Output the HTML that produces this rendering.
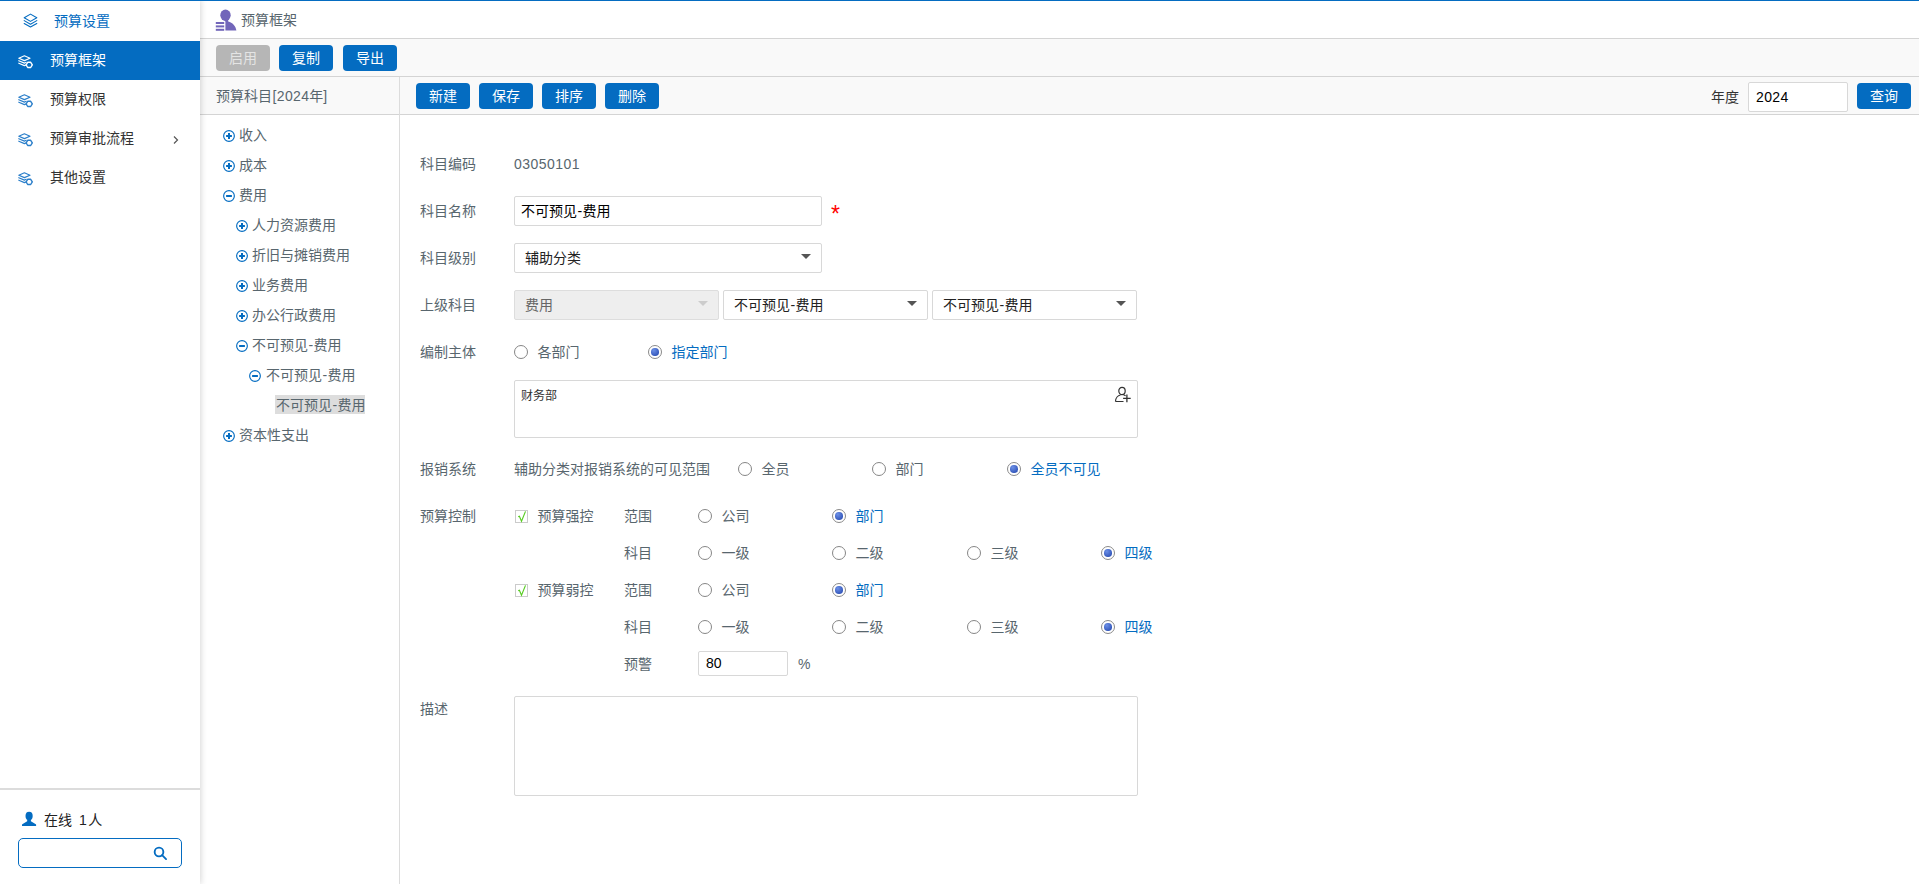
<!DOCTYPE html>
<html lang="zh-CN">
<head>
<meta charset="utf-8">
<title>预算框架</title>
<style>
*{box-sizing:border-box;margin:0;padding:0}
html,body{width:1919px;height:884px;overflow:hidden;background:#fff}
body{position:relative;font-family:"Liberation Sans","Noto Sans CJK SC",sans-serif;font-size:14px;color:#58666e;line-height:20px}
.abs{position:absolute}
#topline{left:0;top:0;width:1919px;height:1px;background:#046cc1;z-index:20}
/* sidebar */
#side{left:0;top:0;width:200px;height:884px;background:#fff;z-index:5;box-shadow:1px 0 6px rgba(0,0,0,.16)}
.mi{position:absolute;left:0;width:200px;height:39px;line-height:39px;color:#333}
.mi span.t{position:absolute;left:50px;top:0;white-space:nowrap}
.mi svg{position:absolute;left:18px;top:12px}
.mi.act{background:#046cc1;color:#fff}
.mi.head{color:#046cc1}
.mi.head span.t{left:54px}
#sidefoot{left:0;top:788px;width:200px;height:2px;background:#dcdcdc}
/* main */
#main{left:200px;top:0;width:1719px;height:884px;background:#fff}
.hl{position:absolute;height:1px;background:#d4d4d4}
.bar{position:absolute;background:#f9f9f9}
.btn{position:absolute;width:54px;height:26px;line-height:26px;border-radius:4px;background:#046cc1;color:#fff;text-align:center;font-size:14px}
.btn.dis{background:#b6b6b6;color:#e4e4e4}
.tn{position:absolute;white-space:nowrap;line-height:20px;height:20px;color:#58666e}
.tn svg{position:absolute;top:4px}
.lab{position:absolute;white-space:nowrap;line-height:20px;height:20px}
.inp{position:absolute;border:1px solid #d8d8d8;border-radius:2px;background:#fff;color:#000;white-space:nowrap;overflow:hidden}
.sel{position:absolute;border:1px solid #d8d8d8;border-radius:2px;background:#fff;color:#222;height:30px;line-height:28px;padding-left:10px;white-space:nowrap}
.sel:after{content:"";position:absolute;right:10px;top:10px;border-left:5px solid transparent;border-right:5px solid transparent;border-top:5px solid #555}
.sel.dis{background:#eee;color:#666;border-color:#ddd}
.sel.dis:after{border-top-color:#ccc}
.rad{position:absolute;width:14px;height:14px;border-radius:50%;border:1px solid #868686;background:#fff}
.rad.on{border-color:#8a8a8a}
.rad.on:after{content:"";position:absolute;left:2.2px;top:2.2px;width:7.6px;height:7.6px;border-radius:50%;background:radial-gradient(circle at 35% 30%,#6b8fe6,#2c4fb4 85%)}
.blue{color:#046cc1}
.hy{padding:0 .45px}
.chk{position:absolute;width:13px;height:13px;border:1px solid #cbcbcb;background:#fff}
</style>
</head>
<body>
<div id="main" class="abs">
<svg class="abs" width="22" height="22" viewBox="0 0 22 22" style="left:15px;top:9.3px" fill="#7266ba"><ellipse cx="10.5" cy="6.2" rx="5.2" ry="5.6"/><path d="M8.800 10 H13.200 V12.400 C17.400 13.600 20.800 16.600 21.400 21.600 H10.400 V12.400 C9.600 12 9 11.200 8.800 10 Z"/><rect x="0.8" y="13" width="8.4" height="2"/><rect x="0.8" y="16.400" width="8.4" height="2"/><rect x="0.8" y="19.800" width="8.4" height="2"/></svg>
<div class="lab" style="left:41px;top:10px;color:#58666e">预算框架</div>
<div class="hl" style="left:0;top:38px;width:1719px"></div>
<div class="bar" style="left:0;top:39px;width:1719px;height:37px"></div>
<div class="hl" style="left:0;top:76px;width:1719px"></div>
<div class="bar" style="left:0;top:77px;width:1719px;height:37px"></div>
<div class="hl" style="left:0;top:114px;width:1719px"></div>
<div class="abs" style="left:199px;top:77px;width:1px;height:807px;background:#dcdcdc"></div>
<div class="btn dis" style="left:16px;top:45px">启用</div>
<div class="btn" style="left:79px;top:45px">复制</div>
<div class="btn" style="left:143px;top:45px">导出</div>
<div class="btn" style="left:216px;top:83px">新建</div>
<div class="btn" style="left:279px;top:83px">保存</div>
<div class="btn" style="left:342px;top:83px">排序</div>
<div class="btn" style="left:405px;top:83px">删除</div>
<div class="lab" style="left:16px;top:86px">预算科目<span style="letter-spacing:.35px;margin-left:.5px">[2024</span>年]</div>
<div class="lab" style="left:1511px;top:87px;color:#333">年度</div>
<div class="inp" style="left:1548px;top:82px;width:100px;height:30px;line-height:28px;padding-left:7px;font-size:14px;letter-spacing:.4px">2024</div>
<div class="btn" style="left:1657px;top:83px">查询</div>
<svg class="abs" width="12" height="12" viewBox="0 0 12 12" style="left:23px;top:129.5px" fill="none" stroke="#046cc1" stroke-width="1.15"><circle cx="6" cy="6" r="5.35"/><path d="M3.100 6 H8.900" stroke-width="2"/><path d="M6 3.100 V8.900" stroke-width="2"/></svg>
<div class="tn" style="left:39px;top:125px">收入</div>
<svg class="abs" width="12" height="12" viewBox="0 0 12 12" style="left:23px;top:159.5px" fill="none" stroke="#046cc1" stroke-width="1.15"><circle cx="6" cy="6" r="5.35"/><path d="M3.100 6 H8.900" stroke-width="2"/><path d="M6 3.100 V8.900" stroke-width="2"/></svg>
<div class="tn" style="left:39px;top:155px">成本</div>
<svg class="abs" width="12" height="12" viewBox="0 0 12 12" style="left:23px;top:189.5px" fill="none" stroke="#046cc1" stroke-width="1.15"><circle cx="6" cy="6" r="5.35"/><path d="M3.100 6 H8.900" stroke-width="2"/></svg>
<div class="tn" style="left:39px;top:185px">费用</div>
<svg class="abs" width="12" height="12" viewBox="0 0 12 12" style="left:36px;top:219.5px" fill="none" stroke="#046cc1" stroke-width="1.15"><circle cx="6" cy="6" r="5.35"/><path d="M3.100 6 H8.900" stroke-width="2"/><path d="M6 3.100 V8.900" stroke-width="2"/></svg>
<div class="tn" style="left:52px;top:215px">人力资源费用</div>
<svg class="abs" width="12" height="12" viewBox="0 0 12 12" style="left:36px;top:249.5px" fill="none" stroke="#046cc1" stroke-width="1.15"><circle cx="6" cy="6" r="5.35"/><path d="M3.100 6 H8.900" stroke-width="2"/><path d="M6 3.100 V8.900" stroke-width="2"/></svg>
<div class="tn" style="left:52px;top:245px">折旧与摊销费用</div>
<svg class="abs" width="12" height="12" viewBox="0 0 12 12" style="left:36px;top:279.5px" fill="none" stroke="#046cc1" stroke-width="1.15"><circle cx="6" cy="6" r="5.35"/><path d="M3.100 6 H8.900" stroke-width="2"/><path d="M6 3.100 V8.900" stroke-width="2"/></svg>
<div class="tn" style="left:52px;top:275px">业务费用</div>
<svg class="abs" width="12" height="12" viewBox="0 0 12 12" style="left:36px;top:309.5px" fill="none" stroke="#046cc1" stroke-width="1.15"><circle cx="6" cy="6" r="5.35"/><path d="M3.100 6 H8.900" stroke-width="2"/><path d="M6 3.100 V8.900" stroke-width="2"/></svg>
<div class="tn" style="left:52px;top:305px">办公行政费用</div>
<svg class="abs" width="12" height="12" viewBox="0 0 12 12" style="left:36px;top:339.5px" fill="none" stroke="#046cc1" stroke-width="1.15"><circle cx="6" cy="6" r="5.35"/><path d="M3.100 6 H8.900" stroke-width="2"/></svg>
<div class="tn" style="left:52px;top:335px">不可预见<span class="hy">-</span>费用</div>
<svg class="abs" width="12" height="12" viewBox="0 0 12 12" style="left:49px;top:369.5px" fill="none" stroke="#046cc1" stroke-width="1.15"><circle cx="6" cy="6" r="5.35"/><path d="M3.100 6 H8.900" stroke-width="2"/></svg>
<div class="tn" style="left:66px;top:365px">不可预见<span class="hy">-</span>费用</div>
<div class="tn" style="left:75px;top:395px;width:90px;height:19px;line-height:20px;background:#ddd;padding-left:1px">不可预见<span class="hy">-</span>费用</div>
<svg class="abs" width="12" height="12" viewBox="0 0 12 12" style="left:23px;top:429.5px" fill="none" stroke="#046cc1" stroke-width="1.15"><circle cx="6" cy="6" r="5.35"/><path d="M3.100 6 H8.900" stroke-width="2"/><path d="M6 3.100 V8.900" stroke-width="2"/></svg>
<div class="tn" style="left:39px;top:425px">资本性支出</div>
<div class="lab" style="left:220px;top:154px">科目编码</div>
<div class="lab" style="left:220px;top:201px">科目名称</div>
<div class="lab" style="left:220px;top:248px">科目级别</div>
<div class="lab" style="left:220px;top:295px">上级科目</div>
<div class="lab" style="left:220px;top:342px">编制主体</div>
<div class="lab" style="left:220px;top:459px">报销系统</div>
<div class="lab" style="left:220px;top:506px">预算控制</div>
<div class="lab" style="left:220px;top:699px">描述</div>
<div class="lab" style="left:314px;top:154px;letter-spacing:.45px">03050101</div>
<div class="inp" style="left:314px;top:196px;width:308px;height:30px;line-height:28px;padding-left:6px">不可预见<span class="hy">-</span>费用</div>
<div class="lab" style="left:631px;top:204px;color:#f00;font-size:23px" id="ast">*</div>
<div class="sel" style="left:314px;top:243px;width:308px">辅助分类</div>
<div class="sel dis" style="left:314px;top:290px;width:205px">费用</div>
<div class="sel" style="left:523px;top:290px;width:205px">不可预见<span class="hy">-</span>费用</div>
<div class="sel" style="left:732px;top:290px;width:205px">不可预见<span class="hy">-</span>费用</div>
<div class="rad" style="left:314px;top:345px"></div><div class="lab" style="left:337.5px;top:342px">各部门</div>
<div class="rad on" style="left:448px;top:345px"></div><div class="lab blue" style="left:471.5px;top:342px">指定部门</div>
<div class="inp" style="left:314px;top:380px;width:624px;height:58px;line-height:18px;padding:6px 6px;font-size:12px;color:#333">财务部</div>
<svg class="abs" width="18" height="18" viewBox="0 0 18 18" style="left:914px;top:386px" fill="none" stroke="#333" stroke-width="1.200"><ellipse cx="8" cy="5" rx="3.200" ry="3.600"/><path d="M1.500 15.500 C1.500 12 4 9.500 6.500 9 M9.500 9 C10.300 9.100 11 9.400 11.600 9.800 M1.500 15.500 H9.500"/><path d="M12.900 8.600 V16.200 M9.100 12.400 H16.700" stroke-width="1.300"/></svg>
<div class="lab" style="left:314px;top:459px">辅助分类对报销系统的可见范围</div>
<div class="rad" style="left:538px;top:462px"></div><div class="lab" style="left:561.5px;top:459px">全员</div>
<div class="rad" style="left:672px;top:462px"></div><div class="lab" style="left:695.5px;top:459px">部门</div>
<div class="rad on" style="left:807px;top:462px"></div><div class="lab blue" style="left:830.5px;top:459px">全员不可见</div>
<div class="chk" style="left:315px;top:510px"><svg width="11" height="11" viewBox="0 0 11 11" style="position:absolute;left:0;top:0;overflow:visible" fill="none" stroke="#58cc22" stroke-width="1.15"><path d="M2.200 5.800 L3.400 5.200 L5.500 10.300 L9.500 0.400"/></svg></div><div class="lab" style="left:337.5px;top:506px">预算强控</div>
<div class="chk" style="left:315px;top:584px"><svg width="11" height="11" viewBox="0 0 11 11" style="position:absolute;left:0;top:0;overflow:visible" fill="none" stroke="#58cc22" stroke-width="1.15"><path d="M2.200 5.800 L3.400 5.200 L5.500 10.300 L9.500 0.400"/></svg></div><div class="lab" style="left:337.5px;top:580px">预算弱控</div>
<div class="lab" style="left:424px;top:506px">范围</div>
<div class="lab" style="left:424px;top:543px">科目</div>
<div class="lab" style="left:424px;top:580px">范围</div>
<div class="lab" style="left:424px;top:617px">科目</div>
<div class="lab" style="left:424px;top:654px">预警</div>
<div class="rad" style="left:498px;top:509px"></div><div class="lab" style="left:521.5px;top:506px">公司</div>
<div class="rad on" style="left:632px;top:509px"></div><div class="lab blue" style="left:655.5px;top:506px">部门</div>
<div class="rad" style="left:498px;top:583px"></div><div class="lab" style="left:521.5px;top:580px">公司</div>
<div class="rad on" style="left:632px;top:583px"></div><div class="lab blue" style="left:655.5px;top:580px">部门</div>
<div class="rad" style="left:498px;top:546px"></div><div class="lab" style="left:521.5px;top:543px">一级</div>
<div class="rad" style="left:632px;top:546px"></div><div class="lab" style="left:655.5px;top:543px">二级</div>
<div class="rad" style="left:767px;top:546px"></div><div class="lab" style="left:790.5px;top:543px">三级</div>
<div class="rad on" style="left:901px;top:546px"></div><div class="lab blue" style="left:924.5px;top:543px">四级</div>
<div class="rad" style="left:498px;top:620px"></div><div class="lab" style="left:521.5px;top:617px">一级</div>
<div class="rad" style="left:632px;top:620px"></div><div class="lab" style="left:655.5px;top:617px">二级</div>
<div class="rad" style="left:767px;top:620px"></div><div class="lab" style="left:790.5px;top:617px">三级</div>
<div class="rad on" style="left:901px;top:620px"></div><div class="lab blue" style="left:924.5px;top:617px">四级</div>
<div class="inp" style="left:498px;top:651px;width:90px;height:25px;line-height:23px;padding-left:7px">80</div>
<div class="lab" style="left:598px;top:654px">%</div>
<div class="inp" style="left:314px;top:696px;width:624px;height:100px"></div>
</div>
<div id="side" class="abs">
<div class="mi head" style="top:2px"><svg width="15" height="15.2" viewBox="0 0 15 16" preserveAspectRatio="none" style="left:22.8px;top:11.400px" fill="none" stroke="#046cc1" stroke-width="1.1" stroke-linejoin="round" stroke-linecap="round"><path d="M7.5 1.2 L13.8 5 L7.5 8.8 L1.2 5 Z"/><path d="M1.2 8 L7.5 11.8 L13.8 8"/><path d="M1.2 11 L7.5 14.8 L13.8 11"/></svg><span class="t">预算设置</span></div>
<div class="mi act" style="top:41px"><svg width="16" height="14" viewBox="0 0 16 14" style="left:17.6px;top:13.5px" fill="none" stroke="#fff" stroke-width="1.15" stroke-linejoin="round" stroke-linecap="round"><path d="M6.4 0.800 L12 3.200 L6.400 5.600 L0.800 3.200 Z"/><path d="M0.800 5.700 L6.400 8.100 L8.200 7.300"/><path d="M0.800 8.200 L6.400 10.600 L7.600 10.100"/><path d="M9.700 7.300 L12.700 7.300 L14.300 9.900 L12.700 12.500 L9.700 12.500 L8.100 9.900 Z" fill="#046cc1" stroke-width="1.400"/></svg><span class="t">预算框架</span></div>
<div class="mi" style="top:80px"><svg width="16" height="14" viewBox="0 0 16 14" style="left:17.6px;top:13.5px" fill="none" stroke="#2b7fca" stroke-width="1.15" stroke-linejoin="round" stroke-linecap="round"><path d="M6.4 0.800 L12 3.200 L6.400 5.600 L0.800 3.200 Z"/><path d="M0.800 5.700 L6.400 8.100 L8.200 7.300"/><path d="M0.800 8.200 L6.400 10.600 L7.600 10.100"/><path d="M9.700 7.300 L12.700 7.300 L14.300 9.900 L12.700 12.500 L9.700 12.500 L8.100 9.900 Z" fill="#fff" stroke-width="1.400"/></svg><span class="t">预算权限</span></div>
<div class="mi" style="top:119px"><svg width="16" height="14" viewBox="0 0 16 14" style="left:17.6px;top:13.5px" fill="none" stroke="#2b7fca" stroke-width="1.15" stroke-linejoin="round" stroke-linecap="round"><path d="M6.4 0.800 L12 3.200 L6.400 5.600 L0.800 3.200 Z"/><path d="M0.800 5.700 L6.400 8.100 L8.200 7.300"/><path d="M0.800 8.200 L6.400 10.600 L7.600 10.100"/><path d="M9.700 7.300 L12.700 7.300 L14.300 9.900 L12.700 12.500 L9.700 12.500 L8.100 9.900 Z" fill="#fff" stroke-width="1.400"/></svg><span class="t">预算审批流程</span><svg width="8" height="10" viewBox="0 0 8 10" style="left:172px;top:15.6px" fill="none" stroke="#555" stroke-width="1.2"><path d="M2 1.5 L5.5 5 L2 8.5"/></svg></div>
<div class="mi" style="top:158px"><svg width="16" height="14" viewBox="0 0 16 14" style="left:17.6px;top:13.5px" fill="none" stroke="#2b7fca" stroke-width="1.15" stroke-linejoin="round" stroke-linecap="round"><path d="M6.4 0.800 L12 3.200 L6.400 5.600 L0.800 3.200 Z"/><path d="M0.800 5.700 L6.400 8.100 L8.200 7.300"/><path d="M0.800 8.200 L6.400 10.600 L7.600 10.100"/><path d="M9.700 7.300 L12.700 7.300 L14.300 9.900 L12.700 12.500 L9.700 12.500 L8.100 9.900 Z" fill="#fff" stroke-width="1.400"/></svg><span class="t">其他设置</span></div>
<div id="sidefoot" class="abs"></div>
<svg class="abs" width="16" height="16" viewBox="21 811 16 16" style="left:21px;top:811px" fill="#046cc1"><ellipse cx="29.100" cy="816.100" rx="3.600" ry="4.250"/><path d="M27.200 819.500 L27.200 821.300 L22.300 824.200 Q22 824.400 22 824.800 L22 826.100 L36.100 826.100 L36.100 824.800 Q36.100 824.400 35.800 824.200 L30.900 821.300 L30.900 819.500 Z"/></svg>
<div class="abs" style="left:44px;top:810px;line-height:20px;color:#222;white-space:nowrap;word-spacing:3px">在线 1<span style="margin-left:1.5px">人</span></div>
<div class="abs" style="left:18px;top:838px;width:164px;height:30px;border:1px solid #046cc1;border-radius:5px;background:#fff"><svg width="14.5" height="14.5" viewBox="0 0 14 14" style="position:absolute;left:134.3px;top:7px" fill="none" stroke="#046cc1" stroke-width="1.8"><circle cx="5.8" cy="5.8" r="4.2"/><path d="M8.8 8.8 L12.6 12.6" stroke-linecap="round"/></svg></div>
</div>
<div id="topline" class="abs"></div>
</body>
</html>
